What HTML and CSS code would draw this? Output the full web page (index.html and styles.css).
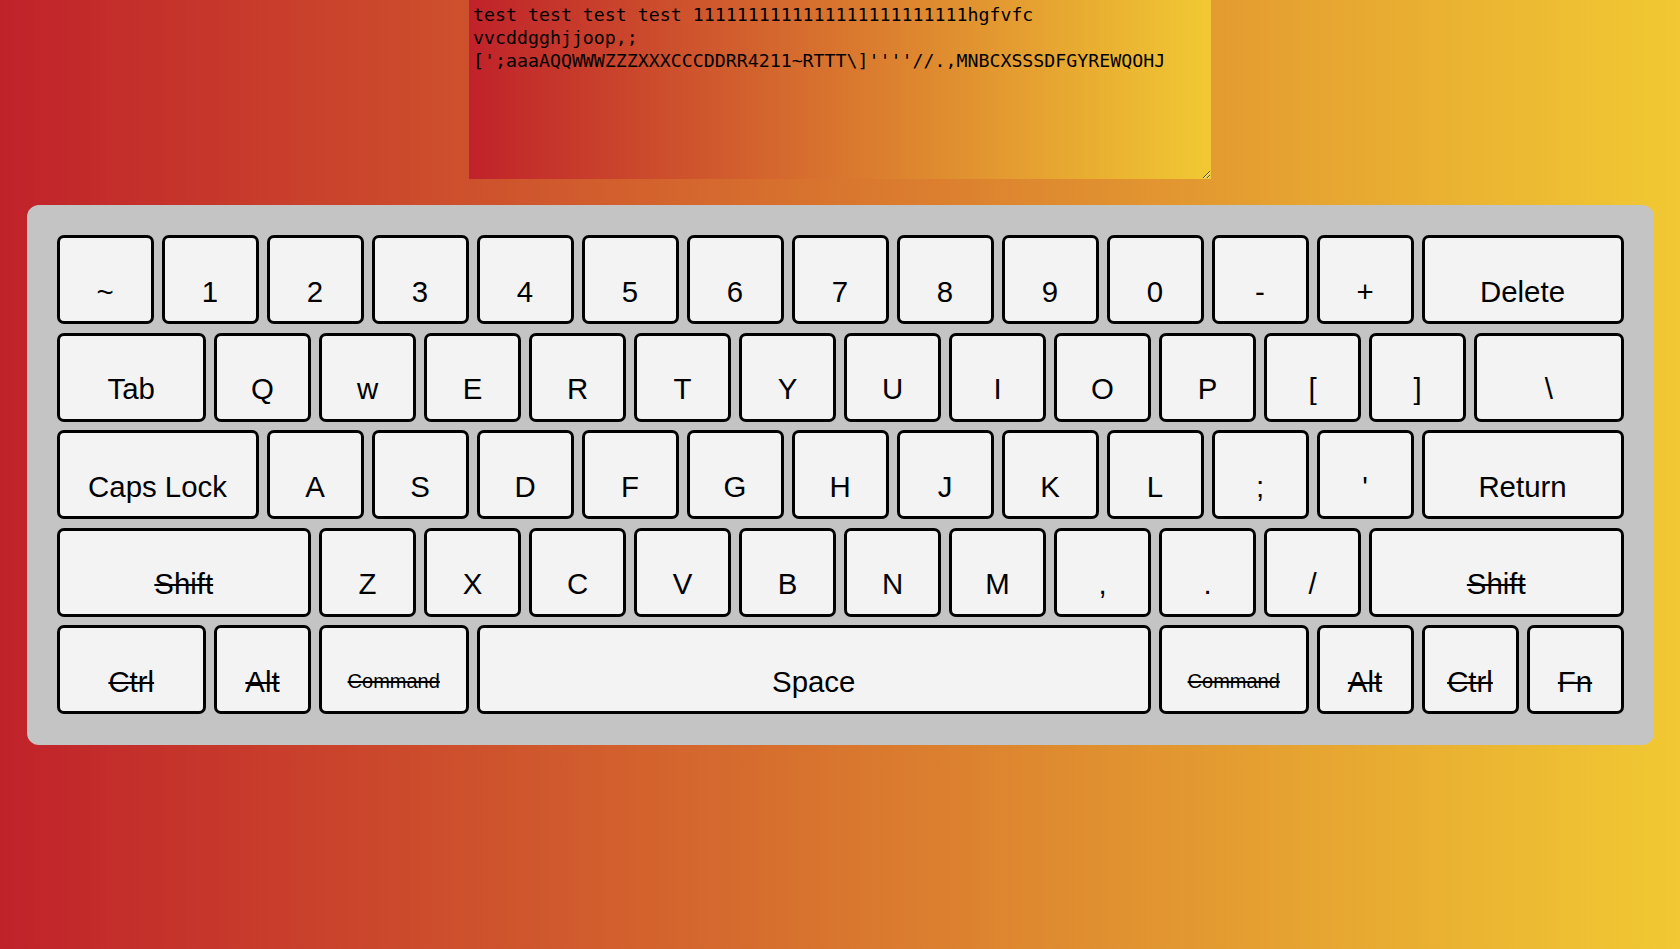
FILE: index.html
```html
<!DOCTYPE html>
<html lang="en">
<head>
<meta charset="utf-8">
<title>Keyboard</title>
<link rel="stylesheet" href="styles.css">
</head>
<body>
<textarea class="output" spellcheck="false">test test test test 1111111111111111111111111hgfvfc
vvcddgghjjoop,;
[';aaaAQQWWWZZZXXXCCCDDRR4211~RTTT\]''''//.,MNBCXSSSDFGYREWQOHJ</textarea>
<div class="keyboard">
  <div class="key s2">~</div>
  <div class="key s2">1</div>
  <div class="key s2">2</div>
  <div class="key s2">3</div>
  <div class="key s2">4</div>
  <div class="key s2">5</div>
  <div class="key s2">6</div>
  <div class="key s2">7</div>
  <div class="key s2">8</div>
  <div class="key s2">9</div>
  <div class="key s2">0</div>
  <div class="key s2">-</div>
  <div class="key s2">+</div>
  <div class="key s4">Delete</div>

  <div class="key s3">Tab</div>
  <div class="key s2">Q</div>
  <div class="key s2">w</div>
  <div class="key s2">E</div>
  <div class="key s2">R</div>
  <div class="key s2">T</div>
  <div class="key s2">Y</div>
  <div class="key s2">U</div>
  <div class="key s2">I</div>
  <div class="key s2">O</div>
  <div class="key s2">P</div>
  <div class="key s2">[</div>
  <div class="key s2">]</div>
  <div class="key s3">\</div>

  <div class="key s4">Caps Lock</div>
  <div class="key s2">A</div>
  <div class="key s2">S</div>
  <div class="key s2">D</div>
  <div class="key s2">F</div>
  <div class="key s2">G</div>
  <div class="key s2">H</div>
  <div class="key s2">J</div>
  <div class="key s2">K</div>
  <div class="key s2">L</div>
  <div class="key s2">;</div>
  <div class="key s2">'</div>
  <div class="key s4">Return</div>

  <div class="key s5 off">Shift</div>
  <div class="key s2">Z</div>
  <div class="key s2">X</div>
  <div class="key s2">C</div>
  <div class="key s2">V</div>
  <div class="key s2">B</div>
  <div class="key s2">N</div>
  <div class="key s2">M</div>
  <div class="key s2">,</div>
  <div class="key s2">.</div>
  <div class="key s2">/</div>
  <div class="key s5 off">Shift</div>

  <div class="key s3 off">Ctrl</div>
  <div class="key s2 off">Alt</div>
  <div class="key s3 off small">Command</div>
  <div class="key s13">Space</div>
  <div class="key s3 off small">Command</div>
  <div class="key s2 off">Alt</div>
  <div class="key s2 off">Ctrl</div>
  <div class="key s2 off">Fn</div>
</div>
</body>
</html>
```
FILE: styles.css
```css
html, body {
  margin: 0;
  padding: 0;
}

body {
  min-height: 949px;
  background: linear-gradient(to right, #c0222a, #f1c933);
  font-family: "Liberation Sans", Arial, sans-serif;
}

.output {
  display: block;
  box-sizing: border-box;
  width: 742px;
  height: 179px;
  margin: 0 auto;
  padding: 3px 4px;
  border: none;
  outline: none;
  background: linear-gradient(to right, #c0222a, #f1c933);
  color: #000;
  font-family: "DejaVu Sans Mono", "Liberation Mono", monospace;
  font-size: 18.25px;
  line-height: 23px;
  white-space: pre;
  overflow: hidden;
}

.keyboard {
  box-sizing: border-box;
  width: 1627px;
  margin: 26px auto 0;
  padding: 30px 30px 31px;
  background: #c4c4c4;
  border-radius: 12px;
  display: grid;
  grid-template-columns: repeat(30, 1fr);
  grid-auto-rows: 89px;
  column-gap: 8px;
  row-gap: 8.5px;
}

.key {
  box-sizing: border-box;
  background: #f3f3f3;
  border: 3px solid #000;
  border-radius: 7px;
  display: flex;
  align-items: center;
  justify-content: center;
  padding-top: 24px;
  font-size: 29.4px;
  color: #000;
}

.s2 { grid-column: span 2; }
.s3 { grid-column: span 3; }
.s4 { grid-column: span 4; }
.s5 { grid-column: span 5; }
.s13 { grid-column: span 13; }

.off {
  text-decoration: line-through;
}

.small {
  font-size: 20px;
}
```
